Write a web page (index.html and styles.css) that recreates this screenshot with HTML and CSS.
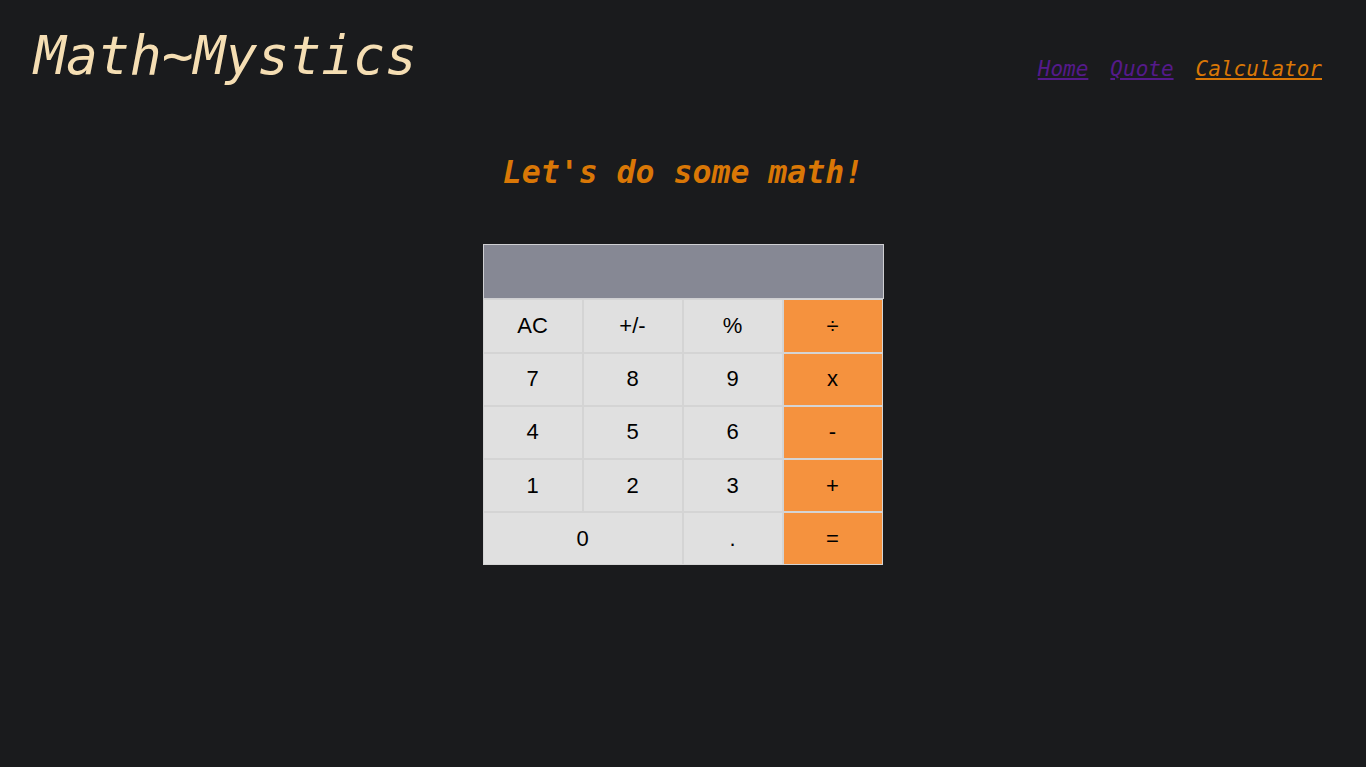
FILE: index.html
```html
<!DOCTYPE html>
<html lang="en">
<head>
<meta charset="utf-8">
<title>Math~Mystics</title>
<link rel="stylesheet" href="styles.css">
</head>
<body>
<header class="site-header">
  <h1 class="logo">Math~Mystics</h1>
  <nav class="nav">
    <a class="nav-link visited" href="#">Home</a>
    <a class="nav-link visited" href="#">Quote</a>
    <a class="nav-link active" href="#">Calculator</a>
  </nav>
</header>
<main class="main">
  <h2 class="tagline">Let's do some math!</h2>
  <div class="calculator">
    <div class="display"></div>
    <div class="keys">
      <button class="key">AC</button>
      <button class="key">+/-</button>
      <button class="key">%</button>
      <button class="key op">÷</button>
      <button class="key">7</button>
      <button class="key">8</button>
      <button class="key">9</button>
      <button class="key op">x</button>
      <button class="key">4</button>
      <button class="key">5</button>
      <button class="key">6</button>
      <button class="key op">-</button>
      <button class="key">1</button>
      <button class="key">2</button>
      <button class="key">3</button>
      <button class="key op">+</button>
      <button class="key zero">0</button>
      <button class="key">.</button>
      <button class="key op">=</button>
    </div>
  </div>
</main>
</body>
</html>
```
FILE: styles.css
```css
html, body {
  margin: 0;
  padding: 0;
  background: #1a1b1d;
  height: 100%;
}
body {
  font-family: "DejaVu Sans Mono", monospace;
}
.site-header {
  display: flex;
  justify-content: space-between;
  align-items: flex-start;
  padding: 0 44px 0 34px;
}
.logo {
  margin: 24px 0 0;
  font-size: 53px;
  font-style: italic;
  font-weight: normal;
  color: #f5deb3;
  line-height: 1.2;
}
.nav {
  display: flex;
  gap: 22px;
  margin-top: 56px;
}
.nav-link {
  font-size: 21px;
  font-style: italic;
  line-height: 1.3;
}
.nav-link.visited { color: #551a8b; }
.nav-link.active { color: #d97706; }
.main {
  display: flex;
  flex-direction: column;
  align-items: center;
}
.tagline {
  margin: 66px 0 0;
  font-size: 31.5px;
  font-style: italic;
  font-weight: bold;
  color: #d97706;
  line-height: 1.2;
}
.calculator {
  margin-top: 53px;
  width: 401px;
}
.display {
  box-sizing: border-box;
  height: 55px;
  background: #868894;
  border: 1px solid #cfcfd2;
}
.keys {
  display: grid;
  grid-template-columns: repeat(4, 100px);
  grid-auto-rows: 53.2px;
}
.key {
  box-sizing: border-box;
  margin: 0;
  border: 1px solid #d4d4d4;
  background: #e0e0e0;
  font-family: "Liberation Sans", Arial, sans-serif;
  font-size: 22px;
  color: #000;
  padding: 0;
}
.key.op { background: #f5923e; }
.key.zero { grid-column: span 2; }
```
